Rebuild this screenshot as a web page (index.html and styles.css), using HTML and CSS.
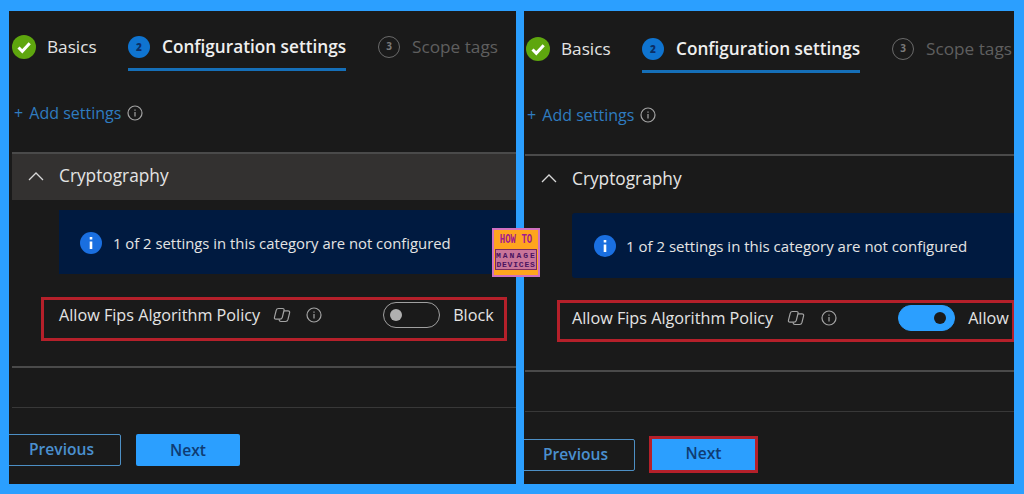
FILE: index.html
```html
<!DOCTYPE html>
<html lang="en">
<head>
	<meta name="viewport" content="width=device-width, initial-scale=1.0">
	<meta charset="utf-8">
	<title>Allow Fips Algorithm Policy</title>
	<link rel="stylesheet" href="styles.css">
</head>
<body>
	<svg class="defs" width="0" height="0">
		<symbol id="check" viewBox="0 0 24 24">
			<circle cx="12" cy="12" r="12" fill="#5ea60e"/>
			<path d="M6.5 12.5l3.8 3.8 7.4-8" fill="none" stroke="#fff" stroke-width="3"/>
		</symbol>
		<symbol id="info" viewBox="0 0 16 16">
			<circle cx="8" cy="8" r="7" fill="none" stroke="#a3a3a3" stroke-width="1.2"/>
			<path d="M8 7v4.5M8 4.5v1.2" fill="none" stroke="#a3a3a3" stroke-width="1.2"/>
		</symbol>
		<symbol id="info-solid" viewBox="0 0 22 22">
			<circle cx="11" cy="11" r="11" fill="#1a6fe0"/>
			<path d="M11 9.5v7.5M11 5v2.6" fill="none" stroke="#fff" stroke-width="2.6"/>
		</symbol>
		<symbol id="copilot" viewBox="0 0 18 16">
			<path d="M5.500 1.500h4q2 0 1.500 2l-1.700 6.800q-.5 1.900-2.300 1.900H3q-2 0-1.500-2l1.700-6.800q.5-1.900 2.300-1.900z" fill="none" stroke="#a3a3a3" stroke-width="1.200"/>
			<path d="M11 3.800h3.800q2.300 0 1.800 2l-1.700 6.900q-.5 1.800-2.300 1.800H8q-2 0-1.700-2.200" fill="none" stroke="#a3a3a3" stroke-width="1.200"/>
		</symbol>
	</svg>

	<div class="panel panel-left">
		<div class="steps">
			<div class="step step-done">
				<svg class="step-check"><use href="#check"/></svg>
				<span>Basics</span>
			</div>
			<div class="step step-active">
				<b class="step-num">2</b>
				<span>Configuration settings</span>
			</div>
			<div class="step step-off">
				<b class="step-num">3</b>
				<span>Scope tags</span>
			</div>
		</div>
		<div class="add-row">
			<span class="add-link"><i>+</i> Add settings</span>
			<svg class="info-icon"><use href="#info"/></svg>
		</div>
		<div class="section-head">
			<svg class="chevron" viewBox="0 0 16 9"><path d="M1 8l7-7 7 7" fill="none" stroke="#d8d8d8" stroke-width="1.300"/></svg>
			<span>Cryptography</span>
		</div>
		<div class="banner">
			<svg class="banner-icon"><use href="#info-solid"/></svg>
			<span>1 of 2 settings in this category are not configured</span>
		</div>
		<div class="setting">
			<span class="setting-name">Allow Fips Algorithm Policy</span>
			<svg class="copilot-icon"><use href="#copilot"/></svg>
			<svg class="info-icon"><use href="#info"/></svg>
			<span class="toggle"><i></i></span>
			<span class="toggle-label">Block</span>
		</div>
		<div class="rule"></div>
		<div class="rule rule-dim"></div>
		<div class="buttons">
			<span class="btn btn-prev">Previous</span>
			<span class="btn btn-next">Next</span>
		</div>
	</div>

	<div class="panel panel-right">
		<div class="steps">
			<div class="step step-done">
				<svg class="step-check"><use href="#check"/></svg>
				<span>Basics</span>
			</div>
			<div class="step step-active">
				<b class="step-num">2</b>
				<span>Configuration settings</span>
			</div>
			<div class="step step-off">
				<b class="step-num">3</b>
				<span>Scope tags</span>
			</div>
		</div>
		<div class="add-row">
			<span class="add-link"><i>+</i> Add settings</span>
			<svg class="info-icon"><use href="#info"/></svg>
		</div>
		<div class="section-head">
			<svg class="chevron" viewBox="0 0 16 9"><path d="M1 8l7-7 7 7" fill="none" stroke="#d8d8d8" stroke-width="1.300"/></svg>
			<span>Cryptography</span>
		</div>
		<div class="banner">
			<svg class="banner-icon"><use href="#info-solid"/></svg>
			<span>1 of 2 settings in this category are not configured</span>
		</div>
		<div class="setting">
			<span class="setting-name">Allow Fips Algorithm Policy</span>
			<svg class="copilot-icon"><use href="#copilot"/></svg>
			<svg class="info-icon"><use href="#info"/></svg>
			<span class="toggle toggle-on"><i></i></span>
			<span class="toggle-label">Allow</span>
		</div>
		<div class="rule"></div>
		<div class="rule rule-dim"></div>
		<div class="buttons">
			<span class="btn btn-prev">Previous</span>
			<span class="btn btn-next btn-marked">Next</span>
		</div>
	</div>

	<div class="logo">
		<div class="logo-top">HOW TO</div>
		<div class="logo-box">
			<div class="logo-line">MANAGE</div>
			<div class="logo-line logo-line-b">DEVICES</div>
		</div>
	</div>
</body>
</html>
```

FILE: styles.css
```css
body, div{
	margin: 0;
	padding: 0;
}
html, body{
	height: 100%;
}
body{
	position: relative;
	display: flex;
	gap: 8px;
	box-sizing: border-box;
	height: 494px;
	padding: 11px 10px 10px 9px;
	overflow: hidden;
	background: #2b9fff;
	color: #e4e4e4;
	font: 16px/20px "Open Sans", "Noto Sans", sans-serif;
}
.defs{
	position: absolute;
}
i{
	font-style: normal;
}

.panel{
	height: 473px;
	overflow: hidden;
	background: #1a1a1a;
}
.panel-left{
	width: 507px;
	padding-top: 24px;
	box-sizing: border-box;
}
.panel-right{
	width: 490px;
	padding-top: 26px;
	box-sizing: border-box;
}

/* wizard steps */
.steps{
	display: flex;
	height: 36px;
	padding-left: 3px;
	white-space: nowrap;
}
.panel-right .steps{
	padding-left: 2px;
}
.step{
	display: flex;
	align-items: flex-start;
	gap: 12px;
	font-size: 17.200px;
	line-height: 24px;
}
.step-check{
	flex: none;
	width: 24px;
	height: 24px;
}
.step-done{
	gap: 11px;
	width: 83px;
	margin-right: 33px;
}
.step-num{
	flex: none;
	width: 22px;
	height: 22px;
	margin-top: 1px;
	border-radius: 50%;
	box-sizing: border-box;
	font-size: 10px;
	line-height: 22px;
	text-align: center;
}
.step-active{
	height: 36px;
	box-sizing: border-box;
	border-bottom: 3px solid #156fb8;
	margin-right: 32px;
	font-weight: 600;
	color: #efefef;
}
.step-active .step-num{
	background: #0f74d0;
	color: #0b2f66;
}
.step-off{
	color: #5f5f5f;
}
.step-off .step-num{
	border: 1.500px solid #6a6a6a;
	color: #7a7a7a;
	line-height: 19px;
}

/* add settings */
.add-row{
	display: flex;
	align-items: center;
	gap: 6px;
	height: 20px;
	margin-top: 32px;
	padding-left: 5px;
}
.panel-right .add-row{
	padding-left: 3px;
}
.add-link{
	color: #2f7cc0;
	font-size: 16px;
}
.add-link i{
	margin-right: 2px;
}
.info-icon{
	width: 16px;
	height: 16px;
}

/* section */
.section-head{
	display: flex;
	align-items: center;
	gap: 15px;
	box-sizing: border-box;
	height: 48px;
	margin-top: 29px;
	margin-left: 3px;
	padding: 0 0 2px 16px;
	border-top: 2px solid #4a4a4a;
	background: #333130;
	font-size: 17.300px;
}
.panel-right .section-head{
	height: 49px;
	margin-left: 1px;
	background: none;
}
.chevron{
	width: 16px;
	height: 9px;
}
.banner{
	display: flex;
	align-items: center;
	gap: 11px;
	height: 64px;
	margin: 10px 0 0 50px;
	padding: 1px 0 0 21px;
	box-sizing: border-box;
	background: #001a40;
	font-size: 14.850px;
}
.panel-right .banner{
	gap: 10px;
	height: 65px;
	margin-left: 48px;
	padding: 0 0 0 22px;
	border-radius: 3px 0 0 3px;
	font-size: 15px;
}
.banner-icon{
	width: 22px;
	height: 22px;
}

/* the setting with its red frame */
.setting{
	display: flex;
	align-items: center;
	box-sizing: border-box;
	width: 466px;
	height: 44px;
	margin: 23px 0 0 32px;
	padding: 0 0 8px 15px;
	border: 3px solid #b5202a;
	font-size: 16.200px;
	white-space: nowrap;
}
.panel-right .setting{
	width: 458px;
	height: 42px;
	margin: 22px 0 0 33px;
	padding: 0 0 6px 12px;
}
.copilot-icon{
	width: 18px;
	height: 16px;
	margin-left: 13px;
}
.setting .info-icon{
	margin: 0 0 0 15px;
}
.panel-right .copilot-icon{
	margin-left: 14px;
}
.panel-right .setting .info-icon{
	margin-left: 16px;
}
.toggle{
	position: relative;
	box-sizing: border-box;
	width: 57px;
	height: 26px;
	margin-left: 61px;
	border: 1.500px solid #a0a0a0;
	border-radius: 13px;
}
.toggle i{
	position: absolute;
	top: 5.500px;
	left: 6px;
	width: 12px;
	height: 12px;
	border-radius: 50%;
	background: #b0b0b0;
}
.toggle-on{
	border-color: #2b9fff;
	background: #2b9fff;
}
.toggle-on i{
	left: auto;
	right: 8px;
	background: #1a1a1a;
}
.toggle-label{
	margin-left: 13px;
}

.rule{
	height: 2px;
	margin: 25px 0 0 3px;
	background: #4a4a4a;
}
.panel-right .rule{
	margin-top: 28px;
	margin-left: 1px;
}
.rule-dim,
.panel-right .rule-dim{
	height: 1px;
	margin-top: 39px;
	background: #383838;
}

/* footer buttons */
.buttons{
	display: flex;
	align-items: center;
	gap: 15px;
	margin: 26px 0 0 -2px;
	font-weight: 600;
	font-size: 15.600px;
}
.panel-right .buttons{
	gap: 13px;
	margin: 24px 0 0 -3px;
}
.btn{
	box-sizing: border-box;
	height: 32px;
	border-radius: 2px;
	line-height: 29px;
	text-align: center;
}
.btn-prev{
	width: 114px;
	padding-right: 5px;
	border: 1.500px solid #4d8fc4;
	color: #4a90cf;
}
.btn-next{
	width: 104px;
	background: #2b9fff;
	color: #0f3c73;
	line-height: 32px;
}
.btn-marked{
	width: 109px;
	height: 37px;
	margin-left: 1px;
	border: 3.500px solid #b5202a;
	border-radius: 0;
	line-height: 29px;
}

/* logo sits across both panels */
.logo{
	position: absolute;
	left: 492px;
	top: 228px;
	box-sizing: border-box;
	width: 48px;
	height: 49px;
	padding: 2px 1px 2px;
	background: #ffa51e;
	border: 2px solid #d070c0;
	color: #a2198f;
	font-family: "Liberation Mono", monospace;
	font-weight: 700;
	text-align: center;
}
.logo-top{
	font-size: 9px;
	line-height: 16px;
	transform: scaleY(1.5);
}
.logo-box{
	margin-top: 1px;
	padding-top: 1px;
	height: 21px;
	box-sizing: border-box;
	border: 1px solid #7a2a60;
	background: #c9759a;
	color: #4a1460;
	white-space: nowrap;
}
.logo-line{
	font-size: 8px;
	line-height: 9px;
	letter-spacing: 2px;
}
.logo-line-b{
	letter-spacing: .8px;
}
```
